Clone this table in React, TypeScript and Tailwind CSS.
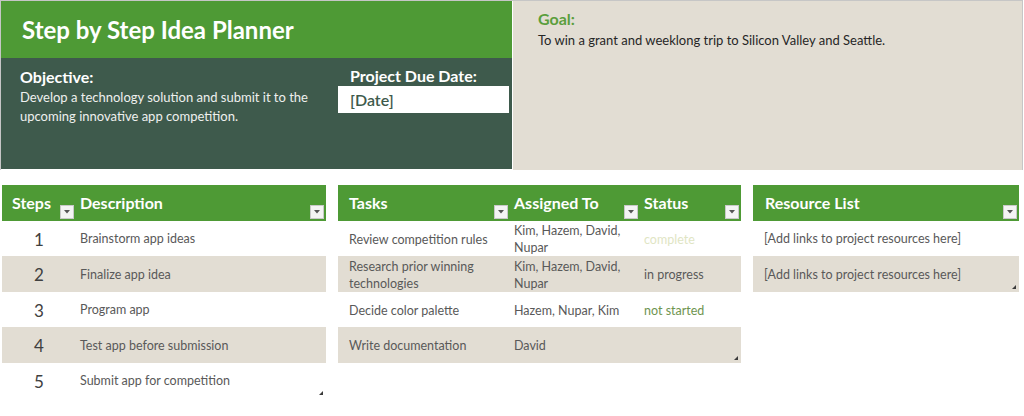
import React from "react";

const font = { fontFamily: "Lato, 'Liberation Sans', sans-serif" };

function Dropdown() {
  return (
    <span className="absolute bottom-[2px] right-[2px] flex h-[14px] w-[14px] items-center justify-center border border-[#c9c9c9] bg-[#f4f4f4]">
      <svg width="6" height="4" viewBox="0 0 6 4">
        <path d="M0 0h6L3 3.5z" fill="#555" />
      </svg>
    </span>
  );
}

function Grip() {
  return (
    <svg className="absolute bottom-[3px] right-[3px]" width="4" height="4" viewBox="0 0 4 4">
      <path d="M4 0v4H0z" fill="#3b3b3b" />
    </svg>
  );
}

function HeaderCell({ label, className }: { label: string; className: string }) {
  return (
    <div className={`relative flex h-full items-center text-[16px] font-bold text-white ${className}`}>
      {label}
      <Dropdown />
    </div>
  );
}

const rowH = ["h-[35px]", "h-[36px]", "h-[35px]", "h-[36px]", "h-[35px]"];

const steps = [
  "Brainstorm app ideas",
  "Finalize app idea",
  "Program app",
  "Test app before submission",
  "Submit app for competition",
];

const tasks = [
  { task: "Review competition rules", who: "Kim, Hazem, David, Nupar", status: "complete", color: "text-[#dfe5c4]" },
  { task: "Research prior winning technologies", who: "Kim, Hazem, David, Nupar", status: "in progress", color: "text-[#5a5a5a]" },
  { task: "Decide color palette", who: "Hazem, Nupar, Kim", status: "not started", color: "text-[#6e9450]" },
  { task: "Write documentation", who: "David", status: "", color: "" },
];

const resources = ["[Add links to project resources here]", "[Add links to project resources here]"];

export default function App() {
  return (
    <div className="h-[416px] w-[1024px] overflow-hidden bg-white" style={font}>
      {/* top summary */}
      <div className="flex h-[170px] w-[1023px] border-l border-t border-r border-[#c6c6c6]">
        <div className="flex w-[511px] flex-col">
          <div className="flex h-[57px] items-center bg-[#4e9a35] pl-[21px] text-[24px] font-bold text-white">
            Step by Step Idea Planner
          </div>
          <div className="flex h-[111px] bg-[#3e5a4c]">
            <div className="w-[337px] pl-[19px] pt-[9px]">
              <div className="text-[16px] font-bold leading-[20px] text-white">Objective:</div>
              <p className="mt-[1px] text-[13px] leading-[19px] text-[#eef0ee]">
                Develop a technology solution and submit it to the upcoming innovative app competition.
              </p>
            </div>
            <div className="flex-1 pt-[8px]">
              <div className="pl-[12px] text-[16px] font-bold leading-[20px] text-white">Project Due Date:</div>
              <div className="flex h-[27px] w-[171px] items-center bg-white pl-[12px] text-[16px] font-semibold text-[#3e5a4c]">
                [Date]
              </div>
            </div>
          </div>
        </div>
        <div className="ml-[1px] h-[169px] flex-1 bg-[#e2ddd3] pl-[25px] pt-[9px]">
          <div className="text-[16px] font-bold leading-[18px] text-[#5a9e3c]">Goal:</div>
          <p className="mt-[4px] text-[13px] leading-[16px] text-[#262626]">
            To win a grant and weeklong trip to Silicon Valley and Seattle.
          </p>
        </div>
      </div>

      {/* tables */}
      <div className="mt-[15px] flex items-start pl-[2px]">
        <div className="relative w-[324px]">
          <div className="flex h-[36px] bg-[#4e9a35]">
            <HeaderCell label="Steps" className="w-[74px] pl-[10px]" />
            <HeaderCell label="Description" className="flex-1 pl-[4px]" />
          </div>
          {steps.map((s, i) => (
            <div key={s} className={`flex items-center pt-[2px] ${rowH[i]} ${i % 2 ? "bg-[#e2ddd3]" : "bg-white"}`}>
              <div className="w-[74px] text-center text-[17px] text-[#404040]">{i + 1}</div>
              <div className="flex-1 pl-[4px] text-[12.5px] text-[#595959]">{s}</div>
            </div>
          ))}
          <Grip />
        </div>

        <div className="relative ml-[12px] w-[403px]">
          <div className="flex h-[36px] bg-[#4e9a35]">
            <HeaderCell label="Tasks" className="w-[172px] pl-[11px]" />
            <HeaderCell label="Assigned To" className="w-[130px] pl-[4px]" />
            <HeaderCell label="Status" className="flex-1 pl-[4px]" />
          </div>
          {tasks.map((t, i) => (
            <div key={t.task} className={`flex items-center pt-[1px] text-[12.5px] leading-[17px] text-[#595959] ${rowH[i]} ${i % 2 ? "bg-[#e2ddd3]" : "bg-white"}`}>
              <div className="w-[172px] pl-[11px] pr-[6px]">{t.task}</div>
              <div className="w-[130px] pl-[4px] pr-[6px]">{t.who}</div>
              <div className={`flex-1 pl-[4px] ${t.color}`}>{t.status}</div>
            </div>
          ))}
          <Grip />
        </div>

        <div className="relative ml-[12px] w-[266px]">
          <div className="flex h-[36px] bg-[#4e9a35]">
            <HeaderCell label="Resource List" className="flex-1 pl-[12px]" />
          </div>
          {resources.map((r, i) => (
            <div key={i} className={`flex items-center pl-[11px] pt-[2px] text-[12.5px] text-[#595959] ${rowH[i]} ${i % 2 ? "bg-[#e2ddd3]" : "bg-white"}`}>
              {r}
            </div>
          ))}
          <Grip />
        </div>
      </div>
    </div>
  );
}
